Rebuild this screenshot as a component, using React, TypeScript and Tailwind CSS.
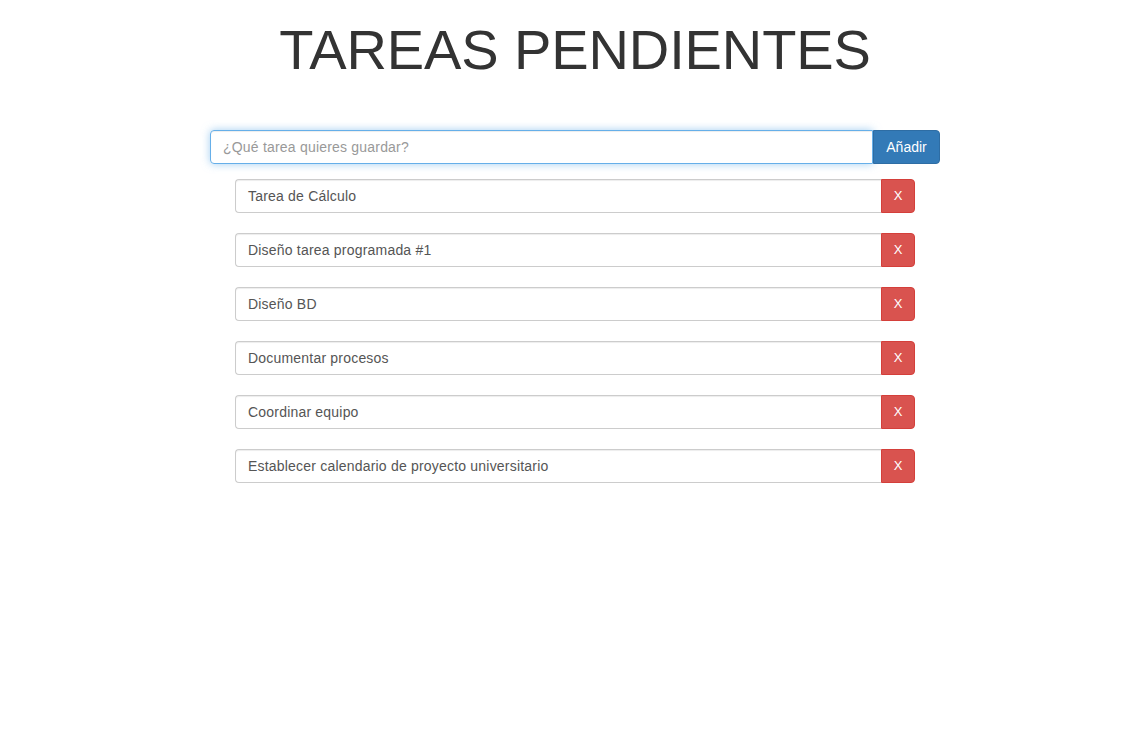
import React from "react";

const tasks = [
  "Tarea de Cálculo",
  "Diseño tarea programada #1",
  "Diseño BD",
  "Documentar procesos",
  "Coordinar equipo",
  "Establecer calendario de proyecto universitario",
];

export default function App() {
  return (
    <div className="min-h-[755px] bg-white text-[#333]" style={{ fontFamily: '"Liberation Sans", Arial, sans-serif' }}>
      <div className="flex flex-col items-center pl-[2px]">
        <h1 className="mt-[20px] text-[56px] leading-[60px] font-normal text-[#333] tracking-[-0.1px]">TAREAS PENDIENTES</h1>
        <div className="mt-[50px] flex w-[730px] h-[34px]">
          <input
            className="flex-1 h-[34px] px-[12px] text-[14px] tracking-[0.2px] text-[#555] border border-[#66afe9] rounded-l-[4px] outline-none placeholder:text-[#999] shadow-[inset_0_1px_1px_rgba(0,0,0,0.075),0_0_8px_rgba(102,175,233,0.6)]"
            placeholder="¿Qué tarea quieres guardar?"
          />
          <button className="w-[67px] h-[34px] bg-[#337ab7] border border-[#2e6da4] text-white text-[14px] rounded-r-[4px]">Añadir</button>
        </div>
        <div className="mt-[15px] flex flex-col gap-[20px] w-[680px]">
          {tasks.map((t) => (
            <div key={t} className="flex h-[34px]">
              <div className="flex-1 flex items-center px-[12px] text-[14px] tracking-[0.2px] text-[#555] border border-[#ccc] border-r-0 rounded-l-[4px] shadow-[inset_0_1px_1px_rgba(0,0,0,0.075)]">
                {t}
              </div>
              <button className="w-[34px] h-[34px] bg-[#d9534f] border border-[#d43f3a] text-white text-[13px] rounded-r-[4px] flex items-center justify-center">X</button>
            </div>
          ))}
        </div>
      </div>
    </div>
  );
}
